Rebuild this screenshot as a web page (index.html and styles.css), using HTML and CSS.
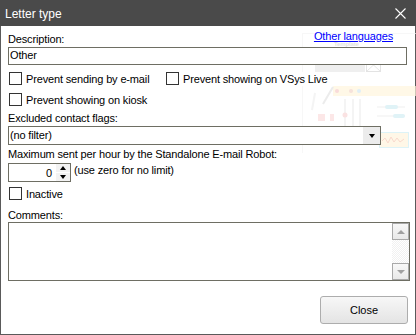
FILE: index.html
```html
<!DOCTYPE html>
<html>
    <head>
        <meta name="viewport" content="width=device-width">
        <title>Letter type</title>
        <link rel="stylesheet" href="styles.css">
    </head>
    <body>
        <div class="dialog">
            <div class="titlebar">
                <span class="title">Letter type</span>
                <svg class="close-x" width="11" height="11" viewBox="0 0 11 11"><path d="M0.5 0.5L10.5 10.5M10.5 0.5L0.5 10.5" stroke="#fff" stroke-width="1.1" fill="none"/></svg>
            </div>
            <div class="content">
                <!-- faded template picture behind the form -->
                <svg class="watermark" width="116" height="125" viewBox="300 28 116 125">
                    <rect x="302.5" y="33.5" width="120" height="120" fill="none" stroke="#f5f5f5"/>
                    <text x="334" y="46" font-family="Liberation Sans, sans-serif" font-size="6" font-weight="bold" fill="#d6d6d6">Template</text>
                    <rect x="315" y="64" width="50" height="8" fill="#e9e9e9"/>
                    <rect x="366.5" y="58.5" width="14" height="13" fill="none" stroke="#d8d8d8"/>
                    <path d="M367 59L380 71M380 59L367 71" stroke="#dedede"/>
                    <rect x="333" y="86" width="83" height="10" fill="#fff6de"/>
                    <circle cx="337" cy="91" r="2" fill="#f7cccc"/>
                    <circle cx="351" cy="91" r="2" fill="#f4d6cc"/>
                    <circle cx="359" cy="91" r="2" fill="#d3e8f4"/>
                    <path d="M333 87L323 104" stroke="#e4e4e4" stroke-width="2"/>
                    <path d="M315 93L312 110" stroke="#f0f0f0" stroke-width="2"/>
                    <path d="M345 99V128M353 99V128M360 99V128" stroke="#ececec" stroke-width="1.5"/>
                    <rect x="318" y="114" width="7" height="7" fill="#fbdede"/>
                    <rect x="330" y="114" width="4" height="7" fill="#fbdede"/>
                    <circle cx="345" cy="115" r="2.5" fill="#f8d6d6"/>
                    <path d="M377 107H405M377 116H405" stroke="#e9e9e9"/>
                    <rect x="385" y="105" width="13" height="4" rx="2" fill="#d4eef5"/>
                    <rect x="393" y="114" width="12" height="4" rx="2" fill="#d4eef5"/>
                    <rect x="379.5" y="132.5" width="29" height="15" fill="#fff4de" stroke="#cfeef5"/>
                    <path d="M382 141L385 138L388 143L391 137L394 142L397 138L400 142L404 139" stroke="#f7c9b8" fill="none"/>
                </svg>

                <div class="label-row">
                    <span class="lbl">Description:</span>
                    <a class="link" href="#">Other languages</a>
                </div>
                <div class="textbox">Other</div>

                <div class="check-row first">
                    <div class="check wide"><span class="box"></span><span class="lbl">Prevent sending by e-mail</span></div>
                    <div class="check"><span class="box"></span><span class="lbl">Prevent showing on VSys Live</span></div>
                </div>
                <div class="check-row second">
                    <div class="check"><span class="box"></span><span class="lbl">Prevent showing on kiosk</span></div>
                </div>

                <div class="field-label flags">Excluded contact flags:</div>
                <div class="select">
                    <span class="select-text">(no filter)</span>
                    <span class="select-btn"><span class="tri-down"></span></span>
                </div>

                <div class="field-label robot">Maximum sent per hour by the Standalone E-mail Robot:</div>
                <div class="spin-row">
                    <div class="spin">
                        <span class="spin-value">0</span>
                        <span class="spin-btns">
                            <span class="spin-up"><span class="tri-up"></span></span>
                            <span class="spin-down"><span class="tri-down small"></span></span>
                        </span>
                    </div>
                    <span class="hint">(use zero for no limit)</span>
                </div>

                <div class="check-row inactive">
                    <div class="check"><span class="box"></span><span class="lbl">Inactive</span></div>
                </div>

                <div class="field-label comments">Comments:</div>
                <div class="memo">
                    <div class="scrollbar">
                        <span class="sb-btn"><span class="sb-up"></span></span>
                        <span class="sb-track"></span>
                        <span class="sb-btn"><span class="sb-down"></span></span>
                    </div>
                </div>

                <div class="footer">
                    <button class="btn">Close</button>
                </div>
            </div>
        </div>
    </body>
</html>
```

FILE: styles.css
```css
body{
    margin:0;
    font-family:"Liberation Sans", Arial, sans-serif;
    font-size:11px;
    letter-spacing:-0.15px;
    color:#000;
}
.dialog
{
    position:relative;
    z-index:0;
    width:416px;
    height:335px;
    box-sizing:border-box;
    border:1px solid #5a5a5a;
    border-top:none;
    background:#fff;
    display:flex;
    flex-direction:column;
}
.titlebar
{
    height:26px;
    margin:0 -1px;
    background:#4a4a4a;
    color:#fff;
    display:flex;
    align-items:center;
    justify-content:space-between;
    padding:0 10px 0 5px;
    font-size:12px;
    letter-spacing:0;
}
.title{margin-top:1px}
.close-x{display:block;margin-top:1px}

.content
{
    position:relative;
    flex:1;
    padding:7px 0 0 7px;
}
.watermark{position:absolute;left:299px;top:2px;z-index:-1;opacity:.7}

.lbl{line-height:13px;background:#fff}
.label-row
{
    display:flex;
    justify-content:space-between;
    align-items:flex-start;
    width:385px;
    height:13px;
    line-height:13px;
}
.link{color:#0000ff;text-decoration:underline;margin-top:-3px;line-height:13px}

.textbox
{
    width:399px;
    height:18px;
    box-sizing:border-box;
    margin-top:1px;
    border:1px solid #6e6e63;
    background:#fff;
    padding:1px 0 0 1px;
    line-height:13px;
}

.check-row{display:flex;height:13px}
.check-row.first{margin-top:7px}
.check-row.second{margin-top:8px}
.check-row.inactive{margin-top:5px}
.check{display:flex;align-items:center;gap:4px;margin-left:1px;height:13px}
.check.wide{width:156px}
.check .lbl{padding:1px 1px 0 0}
.box
{
    width:13px;
    height:13px;
    box-sizing:border-box;
    border:1px solid #333;
    background:#fff;
}

.field-label{line-height:13px;height:13px}
.field-label.flags{margin-top:6px}
.field-label.robot{margin-top:3px}
.field-label.comments{margin-top:9px}

.select
{
    width:373px;
    height:19px;
    box-sizing:border-box;
    margin-top:1px;
    border:1px solid #6e6e63;
    background:#fff;
    display:flex;
    justify-content:space-between;
}
.select-text{line-height:17px;padding-left:1px}
.select-btn
{
    width:17px;
    height:17px;
    background:#ececec;
    display:flex;
    align-items:center;
    justify-content:center;
}
.tri-down
{
    width:0;height:0;
    border-left:3px solid transparent;
    border-right:3px solid transparent;
    border-top:4px solid #000;
}
.tri-up
{
    width:0;height:0;
    border-left:3px solid transparent;
    border-right:3px solid transparent;
    border-bottom:4px solid #000;
}

.spin-row{display:flex;align-items:flex-start;gap:3px;margin-top:2px}
.spin
{
    width:63px;
    height:19px;
    box-sizing:border-box;
    border:1px solid #6e6e63;
    background:#fff;
    display:flex;
    justify-content:flex-end;
}
.spin-value{line-height:17px;padding-right:4px;padding-top:1px}
.spin-btns{width:14px;display:flex;flex-direction:column;background:#f3f3f3}
.spin-up,.spin-down{flex:1;display:flex;align-items:center;justify-content:center}
.spin-up{border-bottom:1px solid #fff}
.hint{line-height:13px;margin-top:1px}

.memo
{
    position:relative;
    width:402px;
    height:59px;
    box-sizing:border-box;
    border:1px solid #6e6e63;
    background:#fff;
    display:flex;
    justify-content:flex-end;
}
.scrollbar{width:17px;display:flex;flex-direction:column}
.sb-btn
{
    height:17px;
    box-sizing:border-box;
    border:1px solid #a9a9a9;
    background:linear-gradient(#f8f8f8,#e9e9e9);
    display:flex;
    align-items:center;
    justify-content:center;
}
.sb-track{flex:1;background:repeating-conic-gradient(#f1f1f1 0 25%,#fff 0 50%) 0 0/2px 2px}
.sb-up
{
    width:0;height:0;
    border-left:4px solid transparent;
    border-right:4px solid transparent;
    border-bottom:4px solid #a0a0a0;
}
.sb-down
{
    width:0;height:0;
    border-left:4px solid transparent;
    border-right:4px solid transparent;
    border-top:4px solid #a0a0a0;
}

.footer{display:flex;justify-content:flex-end;margin-top:15px;padding-right:7px}
.btn
{
    width:88px;
    height:28px;
    border:1px solid #adadad;
    border-radius:3px;
    background:linear-gradient(#f7f7f7,#e4e4e4);
    font-family:"Liberation Sans", Arial, sans-serif;
    font-size:11px;
    color:#000;
    padding:0;
}
```
